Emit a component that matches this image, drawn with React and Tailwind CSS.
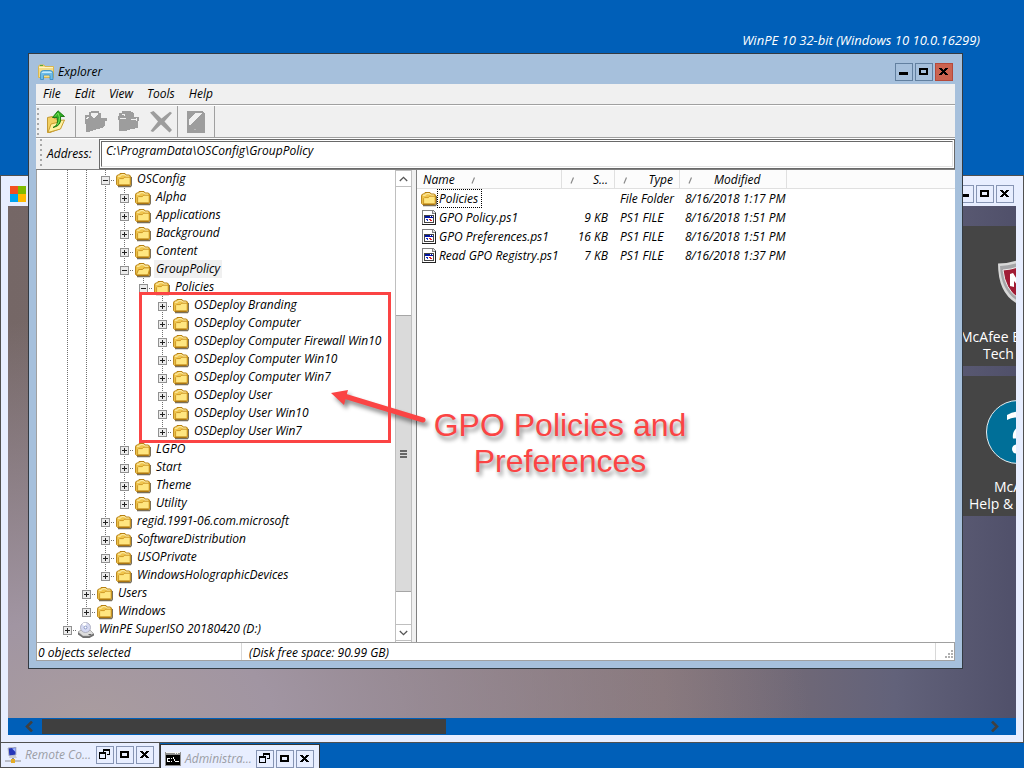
import React from "react";

const TREE = [
  { name: "OSConfig", level: 2, open: true },
  { name: "Alpha", level: 3 },
  { name: "Applications", level: 3 },
  { name: "Background", level: 3 },
  { name: "Content", level: 3 },
  { name: "GroupPolicy", level: 3, open: true, selected: true },
  { name: "Policies", level: 4, open: true, last: true },
  { name: "OSDeploy Branding", level: 5 },
  { name: "OSDeploy Computer", level: 5 },
  { name: "OSDeploy Computer Firewall Win10", level: 5 },
  { name: "OSDeploy Computer Win10", level: 5 },
  { name: "OSDeploy Computer Win7", level: 5 },
  { name: "OSDeploy User", level: 5 },
  { name: "OSDeploy User Win10", level: 5 },
  { name: "OSDeploy User Win7", level: 5, last: true },
  { name: "LGPO", level: 3 },
  { name: "Start", level: 3 },
  { name: "Theme", level: 3 },
  { name: "Utility", level: 3, last: true },
  { name: "regid.1991-06.com.microsoft", level: 2 },
  { name: "SoftwareDistribution", level: 2 },
  { name: "USOPrivate", level: 2 },
  { name: "WindowsHolographicDevices", level: 2, last: true },
  { name: "Users", level: 1 },
  { name: "Windows", level: 1, last: true },
  { name: "WinPE SuperISO 20180420 (D:)", level: 0, drive: true },
];

const FILES = [
  { name: "Policies", size: "", type: "File Folder", modified: "8/16/2018 1:17 PM", folder: true },
  { name: "GPO Policy.ps1", size: "9 KB", type: "PS1 FILE", modified: "8/16/2018 1:51 PM" },
  { name: "GPO Preferences.ps1", size: "16 KB", type: "PS1 FILE", modified: "8/16/2018 1:51 PM" },
  { name: "Read GPO Registry.ps1", size: "7 KB", type: "PS1 FILE", modified: "8/16/2018 1:37 PM" },
];

function FolderIcon({ open }) {
  return (
    <svg width="16" height="16" viewBox="0 0 16 16" className="shrink-0" aria-hidden="true">
      <path d="M2 14.500h12.500l1-1.500V5" fill="none" stroke="#4d3f22" strokeOpacity=".75" strokeWidth="1.400" />
      <path d="M.6 12.500V4.200L1.600 3h1L4 1.500h5l1.200 1.500h3.200l1.100 1.200v8.300l-1 1H1.600z" fill="#f0c64e" stroke="#b57f12" />
      <path d="M2 4.200h2.500l1-1.500h3l1.200 1.500H13" fill="none" stroke="#fff3b8" />
      {open ? (
        <path d="M1.200 13 3.600 7.500h4l1.300-1.600h6l-2 7.100z" fill="#ffe680" stroke="#be8616" strokeWidth=".9" />
      ) : (
        <path d="M2.600 12.900V7.600l1-1h3.800l1.200-1.400h5.600v7.700z" fill="#ffe680" stroke="#c8921f" strokeWidth=".9" />
      )}
      <path d="M2 13.300h11.500" stroke="#a87311" />
    </svg>
  );
}

function DriveIcon() {
  return (
    <svg width="16" height="16" viewBox="0 0 16 16" className="shrink-0" aria-hidden="true">
      <path d="M0 10l3-2h9l4 4v1.500l-4.500 2.500H5l-5-3.500z" fill="#6f6f6f" />
      <path d="M0 10l3-2h9l3.500 3.500L11 14H5z" fill="#dcdcdc" stroke="#999" strokeWidth=".5" />
      <ellipse cx="7.500" cy="5.500" rx="5" ry="5" fill="#d5d9f2" stroke="#a3a5b5" strokeWidth=".8" />
      <path d="M7.500 5.500 4 2a5 5 0 0 1 4.500-1z" fill="#fff" />
      <circle cx="7.500" cy="5.500" r="1.400" fill="#fff" stroke="#7687b8" strokeWidth=".8" />
      <path d="M10.500 12.500h2.500" stroke="#666" />
    </svg>
  );
}

function ScriptIcon() {
  return (
    <svg width="16" height="16" viewBox="0 0 16 16" className="shrink-0" shapeRendering="crispEdges" aria-hidden="true">
      <path d="M1 0h11l3 3v12H1z" fill="#808080" />
      <path d="M2 1h9v3h3v10H2z" fill="#fff" />
      <path d="M12 1v2h2z" fill="#ddd" />
      <path d="M14 3h1v12H1v-1h13z" fill="#222" />
      <path d="M3 5h10v8H3z" fill="#444" />
      <path d="M4 8h8v4H4z" fill="#fff" />
      <path d="M4 6h8v2H4z" fill="#0014a0" />
      <path d="M9 6h1v1H9zM11 6h1v1h-1z" fill="#fff" />
      <path d="M5 9h2v1H5zM6 9h1v2H6z" fill="#1b35c8" />
      <path d="M8 9h1v1H8zM10 10h1v1h-1zM9 9h1v2H9z" fill="#e02020" />
    </svg>
  );
}

function ExplorerIcon() {
  return (
    <svg width="16" height="16" viewBox="0 0 16 16" aria-hidden="true">
      <path d="M.5 13.500V2.500L1.500 1H6l1 1.500h8.500v11z" fill="#f4dc88" stroke="#d9b650" />
      <path d="M1 3.500h14" stroke="#fff5c0" />
      <path d="M2 1.500h3" stroke="#58a83a" />
      <path d="M2.500 15.500V9.500q0-3 3-3H12q3 0 3 3v6h-3v-3.500q0-1-1-1H6.500q-1 0-1 1v3.500z" fill="#6dbce8" stroke="#3289c4" strokeWidth=".8" />
      <path d="M3.500 9q0-1.500 2-1.500h6.500q2 0 2 1.500z" fill="#c4ecff" />
    </svg>
  );
}

function UpIcon() {
  return (
    <svg width="20" height="24" viewBox="0 0 20 24" aria-hidden="true">
      <path d="M1.500 7.500 6.500 6.500l1.500 2 6.500 1v9L4 22.500H1.500z" fill="#f2cf60" stroke="#c39a35" />
      <path d="M2 22.500 5 14l6-1.500 1.500-2L18.500 10 14.500 19z" fill="#fff1a0" stroke="#c99d31" />
      <path d="M7 17.500q6-2 4-10H6.500L12 .8l6.500 5.700h-4Q16 16 7 17.500z" fill="#2fae24" stroke="#16730e" strokeWidth=".9" />
      <path d="M9 6.500 12 3l1.500 4.500q0 5-2.500 7.500" fill="none" stroke="#77df58" />
    </svg>
  );
}

function CopyToIcon() {
  return (
    <svg width="24" height="22" viewBox="0 0 24 22" shapeRendering="crispEdges" aria-hidden="true">
      <path fillRule="evenodd" d="M1 4h4V1l3-1h7v2h2v5h6v3h-2v4l-3 3-8 2-5 2H2V13H1zM7 2v3l3 2 4-4V2z" fill="#9d9d9d" />
      <path d="M2 8 5 6" stroke="#f0f0f0" fill="none" />
    </svg>
  );
}

function MoveToIcon() {
  return (
    <svg width="22" height="22" viewBox="0 0 22 22" shapeRendering="crispEdges" aria-hidden="true">
      <path d="M1 2h3V0h8l4 2v4h5v4h-1v7l-7 1-6 2H1V9H0V5h1z" fill="#9d9d9d" />
      <path d="M4 3h2v2M13 8l2 1 3-1v2M2 8l6-1" stroke="#f0f0f0" fill="none" />
    </svg>
  );
}

function DeleteIcon() {
  return (
    <svg width="23" height="22" viewBox="0 0 23 22" aria-hidden="true">
      <path d="M0 1.500 3.500 0l8 7.500L20 .8l2 1.200-7.500 8.500 7.500 8.500-2.500 2.500-8.500-8L3 21 .5 20l7.500-9.500z" fill="#9d9d9d" />
    </svg>
  );
}

function PropertiesIcon() {
  return (
    <svg width="20" height="24" viewBox="0 0 20 24" shapeRendering="crispEdges" aria-hidden="true">
      <path d="M1 1h15l3 3v19H1z" fill="#9d9d9d" />
      <path d="M3 15V9L10 3h6L4 15z" fill="#f0f0f0" />
      <path d="M8 19h2v1H8z" fill="#b8b8b8" />
    </svg>
  );
}

const GLYPHS = {
  minimize: <path d="M3 8h9v3H3z" fill="currentColor" />,
  maximize: <path fillRule="evenodd" d="M3 4h9v7H3zM5 6v3h5V6z" fill="currentColor" />,
  restore: (
    <path fillRule="evenodd" d="M6 2h7v6h-3V7h2V4H7v1H6zM2 5h7v7H2zM3 7v4h5V7z" fill="currentColor" />
  ),
  close: <path d="M3 4h3v1h1v1h1V5h1V4h3v1h-1v1h-1v1H9v1h1v1h1v1h1v1H9v-1H8V9H7v1H6v1H3v-1h1V9h1V8h1V7H5V6H4V5H3z" fill="currentColor" />,
};

function WindowButton({ kind, active, danger }) {
  const tone = danger
    ? "border-[#b5493a] bg-[#cb6350]"
    : active
      ? "border-[#6280a0] bg-[#a6c0dc]"
      : "border-[#8795b4] bg-[#e8eeff]";
  return (
    <button type="button" aria-label={kind} className={`size-[18px] shrink-0 border text-black ${tone}`}>
      <svg width="16" height="16" viewBox="0 0 16 16" shapeRendering="crispEdges" aria-hidden="true">
        {GLYPHS[kind]}
      </svg>
    </button>
  );
}

function Grip() {
  return <span className="w-[3px] shrink-0 self-stretch bg-[radial-gradient(circle_at_1px_1px,#a8a8a8_1px,transparent_1px)] bg-[length:3px_5px]" />;
}

function Guide({ half }) {
  return (
    <span className="h-[18px] w-[19px] shrink-0 pl-[9px]">
      <span
        className={`block w-px bg-[repeating-linear-gradient(to_bottom,#707070_0_1px,transparent_1px_2px)] ${half ? "h-[9px]" : "h-[18px]"}`}
      />
    </span>
  );
}

function TreeRow({ item }) {
  const guides = item.level === 5 ? [0, 1, 2, 3, null] : Array.from({ length: item.level }, (_, i) => i);
  return (
    <li role="treeitem" aria-expanded={!!item.open} aria-level={item.level + 1} className="flex h-[18px] items-center">
      {guides.map((g, i) => (g === null ? <span key={i} className="w-[19px] shrink-0" /> : <Guide key={i} />))}
      <span className="grid w-5 shrink-0 grid-cols-[19px]">
        <span className="col-start-1 row-start-1 flex">
          <Guide half={item.last} />
        </span>
        <button
          type="button"
          aria-label={item.open ? `Collapse ${item.name}` : `Expand ${item.name}`}
          className="z-10 col-start-1 row-start-1 mt-[2px] size-[9px] place-self-center border border-[#919191] bg-[#ececec]"
        >
          <svg width="7" height="7" viewBox="0 0 7 7" shapeRendering="crispEdges" className="block">
            <path d={item.open ? "M1 3h5v1H1z" : "M1 3h5v1H1zM3 1h1v5H3z"} fill="#222" />
          </svg>
        </button>
        <span className="col-start-1 row-start-1 mt-[2px] ml-[15px] h-px self-center bg-[repeating-linear-gradient(to_right,#707070_0_1px,transparent_1px_2px)]" />
      </span>
      <span className="flex w-[18px] shrink-0 pt-[2px]">{item.drive ? <DriveIcon /> : <FolderIcon open={item.selected} />}</span>
      <span className={`ml-px h-[18px] px-[2px] leading-[18px] whitespace-nowrap ${item.selected ? "bg-[#f0f0f0]" : ""}`}>{item.name}</span>
    </li>
  );
}

function Chevron({ down }) {
  return (
    <svg width="9" height="6" viewBox="0 0 9 6" aria-hidden="true">
      <path d={down ? "M.8 1 4.500 4.700 8.200 1" : "M.8 5 4.500 1.300 8.200 5"} fill="none" stroke="#555" strokeWidth="1.300" />
    </svg>
  );
}

function TreePane() {
  return (
    <div className="flex w-[376px] shrink-0 border-l border-[#a0a0a0] bg-white">
      <ul role="tree" className="relative min-w-0 flex-1 pb-1 pl-[21px]">
        {TREE.map((item) => (
          <TreeRow key={item.name} item={item} />
        ))}
        <li aria-hidden="true" className="pointer-events-none absolute top-[122px] left-[102px] z-20 h-[151px] w-[252px] border-3 border-[#fb4444]" />
      </ul>
      <div className="flex w-[17px] flex-col border-x border-[#bfbfbf] bg-white pb-px">
        <button type="button" aria-label="Scroll up" className="flex h-[17px] items-center justify-center border-y border-[#bfbfbf]">
          <Chevron />
        </button>
        <div className="flex flex-1 flex-col pt-32 pb-8">
          <div className="flex flex-1 flex-col items-center justify-center gap-px border-y border-[#a6a6a6] bg-[#dadada]">
            <span className="h-[2px] w-[7px] bg-[#666]" />
            <span className="h-[2px] w-[7px] bg-[#666]" />
            <span className="h-[2px] w-[7px] bg-[#666]" />
          </div>
        </div>
        <button type="button" aria-label="Scroll down" className="flex h-[17px] items-center justify-center border-y border-[#bfbfbf]">
          <Chevron down />
        </button>
      </div>
    </div>
  );
}

function SortMark() {
  return (
    <svg width="6" height="7" viewBox="0 0 6 7" className="shrink-0" aria-hidden="true">
      <path d="M1 6.500 3.500.5" stroke="#8a8a8a" strokeWidth="1.200" />
    </svg>
  );
}

function FileTable() {
  const th = "h-[19px] border-r border-b border-[#e0e0e0] p-0 pt-[2px] font-normal leading-4";
  return (
    <div className="min-w-0 flex-1 border-l border-[#808080] bg-white">
      <table className="w-full table-fixed border-separate border-spacing-0 text-left whitespace-nowrap">
        <colgroup>
          <col className="w-[145px]" />
          <col className="w-[53px]" />
          <col className="w-[65px]" />
          <col className="w-[107px]" />
          <col />
        </colgroup>
        <thead className="bg-[#fcfcfc]">
          <tr>
            <th className={th}><span className="flex items-center gap-4 pl-[6px]">Name<SortMark /></span></th>
            <th className={th}><span className="flex items-center justify-between pr-[6px] pl-2"><SortMark />S...</span></th>
            <th className={th}><span className="flex items-center justify-between pr-[6px] pl-2"><SortMark />Type</span></th>
            <th className={th}><span className="flex items-center gap-5 pl-2"><SortMark />Modified</span></th>
            <th className="border-b border-[#e0e0e0] p-0" aria-label="Empty" />
          </tr>
        </thead>
        <tbody>
          {FILES.map((f) => (
            <tr key={f.name}>
              <td className="h-[19px] p-0 pl-1">
                <span className="flex items-center">
                  {f.folder ? <FolderIcon /> : <ScriptIcon />}
                  <span className={`border pr-[3px] pl-px leading-[17px] ${f.folder ? "border-dotted border-black" : "border-transparent"}`}>{f.name}</span>
                </span>
              </td>
              <td className="p-0 pr-[7px] text-right">{f.size}</td>
              <td className="p-0 pl-[5px]">{f.type}</td>
              <td className="p-0 pl-[5px]">{f.modified}</td>
              <td className="p-0" />
            </tr>
          ))}
        </tbody>
      </table>
    </div>
  );
}

function ToolButton({ label, disabled, children }) {
  return (
    <button type="button" aria-label={label} disabled={disabled} className="flex items-center justify-center">
      {children}
    </button>
  );
}

function ExplorerWindow() {
  return (
    <section aria-label="Explorer" className="absolute top-[53px] right-[61px] left-[28px] border border-[#333a42] bg-[#a6c0dc] px-[7px] pb-[7px]">
      <header className="flex h-[30px] items-center gap-1 pt-[6px] pr-[2px] pl-[2px]">
        <ExplorerIcon />
        <h1 className="flex-1 leading-4">Explorer</h1>
        <div className="flex gap-[2px]">
          <WindowButton kind="minimize" active />
          <WindowButton kind="maximize" active />
          <WindowButton kind="close" danger />
        </div>
      </header>
      <div className="bg-[#f0f0f0]">
        <nav className="flex h-[21px] items-center gap-[14px] border-b border-[#a0a0a0] pl-[7px]">
          {["File", "Edit", "View", "Tools", "Help"].map((m) => (
            <button key={m} type="button">{m}</button>
          ))}
        </nav>
        <div className="flex h-[33px] items-stretch border-t border-b border-t-white border-b-[#a0a0a0] pl-px">
          <div className="flex gap-[6px] border-r border-[#a0a0a0] py-[2px] pr-[9px]">
            <Grip />
            <ToolButton label="Up one level"><UpIcon /></ToolButton>
          </div>
          <div className="flex items-center gap-[10px] border-r border-[#a0a0a0] pr-1 pl-2">
            <ToolButton label="Copy to" disabled><CopyToIcon /></ToolButton>
            <ToolButton label="Move to" disabled><MoveToIcon /></ToolButton>
            <ToolButton label="Delete" disabled><DeleteIcon /></ToolButton>
          </div>
          <div className="flex items-center border-r border-[#a0a0a0] px-2">
            <ToolButton label="Properties" disabled><PropertiesIcon /></ToolButton>
          </div>
        </div>
        <div className="flex h-[32px] items-stretch border-t border-b border-t-white border-b-[#808080] pl-1">
          <Grip />
          <label htmlFor="address" className="flex w-[56px] shrink-0 items-center pl-1">Address:</label>
          <div className="min-w-0 flex-1 border border-[#696969] bg-white p-px">
            <input id="address" defaultValue="C:\ProgramData\OSConfig\GroupPolicy" className="block h-[26px] w-full border border-[#e3e3e3] border-t-[#696969] border-l-[#696969] bg-white pb-2 pl-1 italic outline-none" />
          </div>
        </div>
        <div className="flex items-stretch">
          <TreePane />
          <div className="w-[4px] shrink-0 bg-[#f0f0f0]" />
          <FileTable />
        </div>
        <footer className="flex h-[19px] items-stretch border border-[#a0a0a0] bg-white leading-[19px]">
          <span className="w-[205px] shrink-0 border-r border-[#d8d8d8] pl-px">0 objects selected</span>
          <span className="flex-1 border-r border-[#d8d8d8] pl-[7px]">(Disk free space: 90.99 GB)</span>
          <span className="flex w-[18px] items-end justify-end">
            <svg width="10" height="10" viewBox="0 0 10 10" shapeRendering="crispEdges" aria-hidden="true">
              <path d="M7 0h2v2H7zM4 3h2v2H4zM7 3h2v2H7zM1 6h2v2H1zM4 6h2v2H4zM7 6h2v2H7z" fill="#b0b0b0" />
            </svg>
          </span>
        </footer>
      </div>
    </section>
  );
}

function McAfeeShield() {
  return (
    <svg width="18" height="44" viewBox="0 0 18 44" aria-hidden="true">
      <path d="M0 3.500Q10 3.500 20 0v44Q0 34 0 3.500z" fill="#d8d8d8" />
      <path d="M2 6q8 0 18-3v38Q3 31 2 6z" fill="#a5a5a8" />
      <path d="M5 10q8-.5 15-3v31Q7 29 5 10z" fill="#a01c36" stroke="#eee" />
      <path d="M12 26V14l3-1 5 8v5l-4-5v6z" fill="#fff" />
    </svg>
  );
}

function HelpDisc() {
  return (
    <svg width="30" height="64" viewBox="0 0 30 64" aria-hidden="true">
      <circle cx="32" cy="32" r="31.500" fill="#006f98" stroke="#e4eef2" />
      <path d="M21 15q6-3.500 11-3.500 9 0 9 10 0 6-5 9-4 3-4 8h-5q-1-6 3-10 4-3 4-6 0-5-5-5-4 0-8 2.500z" fill="#fff" />
      <circle cx="30.500" cy="49" r="4.500" fill="#fff" />
    </svg>
  );
}

function RemoteWindow() {
  return (
    <section aria-label="Remote session" className="absolute top-[175px] right-0 bottom-[25px] left-0 flex flex-col border border-[#505050] bg-[#e8eeff] px-[7px] pb-[7px]">
      <header className="flex h-[30px] shrink-0 items-center justify-between pt-[6px] pr-px pl-[2px]">
        <svg width="16" height="16" viewBox="0 0 16 16" shapeRendering="crispEdges" aria-hidden="true">
          <path d="M0 0h7.600v7.600H0z" fill="#f25022" />
          <path d="M8 0h8v7.600H8z" fill="#7fba00" />
          <path d="M0 8h7.600v8H0z" fill="#00a4ef" />
          <path d="M8 8h8v8H8z" fill="#ffb900" />
        </svg>
        <div className="flex gap-[2px] pr-px">
          <WindowButton kind="minimize" />
          <WindowButton kind="maximize" />
          <WindowButton kind="close" />
        </div>
      </header>
      <div className="flex min-h-0 flex-1 flex-col items-end gap-[10px] overflow-hidden bg-[radial-gradient(ellipse_at_8%_100%,#a99c9f_0%,#a195a2_14%,transparent_55%),linear-gradient(to_right,#756766_0%,#817072_65%,#62627a_88%,#50506a_100%)] pt-5 font-['Open_Sans',sans-serif] text-sm leading-[17px] text-white not-italic">
        <button type="button" className="flex h-[140px] w-[68px] shrink-0 flex-col items-end overflow-hidden bg-[#454545] pt-[34px] text-left whitespace-nowrap">
          <McAfeeShield />
          <span className="mt-6 w-[56px]">McAfee E</span>
          <span className="w-[33px]">Tech</span>
        </button>
        <button type="button" className="flex h-[140px] w-[68px] shrink-0 flex-col items-end overflow-hidden bg-[#454545] pt-6 text-left whitespace-nowrap">
          <HelpDisc />
          <span className="mt-[14px] w-[22px]">McA</span>
          <span className="w-[47px]">Help &amp;</span>
        </button>
      </div>
      <div className="flex h-[17px] shrink-0 items-center bg-[#005fb8] pr-4 pl-4">
        <button type="button" aria-label="Scroll left" className="w-[18px] shrink-0">
          <svg width="9" height="11" viewBox="0 0 9 11" aria-hidden="true"><path d="M8 .5 3 5.500l5 5" fill="none" stroke="#404040" strokeWidth="2.600" /></svg>
        </button>
        <span className="h-[15px] w-[41.4%] bg-[#3f3f3f]" />
        <button type="button" aria-label="Scroll right" className="ml-auto">
          <svg width="10" height="11" viewBox="0 0 10 11" aria-hidden="true"><path d="M2 .5 7 5.500l-5 5" fill="none" stroke="#404040" strokeWidth="2.600" /></svg>
        </button>
      </div>
    </section>
  );
}

function RemoteIcon() {
  return (
    <svg width="16" height="16" viewBox="0 0 16 16" aria-hidden="true">
      <path d="M3 1 11 0v8l-7 1z" fill="#2536b8" stroke="#b9bdc8" />
      <path d="M7 1.500 10.500 1v4z" fill="#a8bcff" />
      <path d="M5 9h6l1 2H4z" fill="#c9cbd2" />
      <path d="M7 11h2v3H7zM0 13.500h6v1H0zM10 13.500h6v1h-6z" fill="#8b8c90" />
      <path d="M6 12h4v4H6z" fill="#e5ad25" />
    </svg>
  );
}

function ConsoleIcon() {
  return (
    <svg width="16" height="14" viewBox="0 0 16 14" shapeRendering="crispEdges" aria-hidden="true">
      <path d="M0 0h16v14H0z" fill="#8e8e8e" />
      <path d="M1 0h14v1H1zM10 1h1v1h-1zM12 1h1v1h-1z" fill="#f4f4f4" />
      <path d="M1 3h14v10H1z" fill="#000" />
      <path d="M2 6h3v1H3v2h2v1H2zM6 6h1v1H6zM6 9h1v1H6zM8 5h1v2h1v2h1v1h-1V9H9V7H8zM11 9h3v1h-3z" fill="#fff" />
    </svg>
  );
}

function MinimizedWindow({ icon, title }) {
  return (
    <div className="flex w-full items-center gap-1">
      {icon}
      <span className="w-[67px] shrink-0 text-[#9b9da5]">{title}</span>
      <div className="flex gap-[2px]">
        <WindowButton kind="restore" />
        <WindowButton kind="maximize" />
        <WindowButton kind="close" />
      </div>
    </div>
  );
}

export default function App() {
  return (
    <main className="relative min-h-screen overflow-hidden bg-[#005fb8] font-['Open_Sans','Noto_Sans',sans-serif] text-xs text-black italic">
      <p className="absolute top-8 right-[44px] text-[13px] leading-4 text-white">WinPE 10 32-bit (Windows 10 10.0.16299)</p>
      <RemoteWindow />
      <div className="absolute bottom-0 left-0 flex h-[26px] w-[160px] border border-[#505050] bg-[#e8eeff] pl-1">
        <MinimizedWindow icon={<RemoteIcon />} title="Remote Co..." />
      </div>
      <div className="absolute bottom-0 left-[160px] flex h-[24px] w-[160px] border border-b-0 border-[#333] bg-[#e8eeff] pt-1 pl-1">
        <MinimizedWindow icon={<ConsoleIcon />} title="Administra..." />
      </div>
      <ExplorerWindow />
      <svg width="110" height="52" viewBox="0 0 110 52" className="pointer-events-none absolute top-[380px] left-[324px] drop-shadow-[3px_4px_2px_rgba(0,0,0,0.45)]" aria-hidden="true">
        <path d="M20 16 99 40" stroke="#fb4444" strokeWidth="5" strokeLinecap="round" />
        <path d="M7 13 24 10 20 25z" fill="#fb4444" />
      </svg>
      <p className="pointer-events-none absolute top-[407px] left-[429px] w-[262px] text-center font-['Liberation_Sans',Arial,sans-serif] text-[32px] leading-9 text-[#fb4444] not-italic text-shadow-[2px_4px_4px_rgba(0,0,0,0.45)]">
        GPO Policies and Preferences
      </p>
    </main>
  );
}
